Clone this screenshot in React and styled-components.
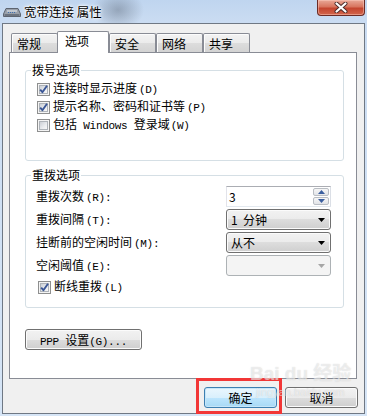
import styled, { createGlobalStyle } from "styled-components";

const GlobalStyle = createGlobalStyle`
  html, body {
    margin: 0;
    padding: 0;
  }
  body {
    width: 367px;
    height: 416px;
    overflow: hidden;
    font-family: "Noto Sans CJK SC", "Liberation Sans", sans-serif;
    font-size: 12px;
    color: #000;
  }
`;

const Window = styled.div`
  position: relative;
  width: 367px;
  height: 416px;
  box-sizing: border-box;
  padding: 0 2px 2px;
  display: flex;
  flex-direction: column;
  background:
    radial-gradient(ellipse 26px 20px at 118px 10px, rgba(60, 70, 85, 0.35), transparent),
    linear-gradient(180deg, #bfd5ef 0%, #cadcf2 22px, #d6e5f6 100%);
`;

const TitleBar = styled.div`
  height: 23px;
  display: flex;
  align-items: flex-start;
`;

const TitleIcon = styled.svg`
  margin: 8px 0 0 1px;
  flex-shrink: 0;
`;

const TitleText = styled.div`
  margin: 4px 0 0 3px;
  font-size: 12.5px;
  line-height: 15px;
  text-shadow: 0 0 5px #fff, 0 0 3px #fff, 0 0 2px #fff;
`;

const CloseButton = styled.div`
  margin-left: auto;
  width: 48px;
  height: 16px;
  box-sizing: border-box;
  border: 1px solid #6b2b25;
  border-top: none;
  border-radius: 0 0 4px 4px;
  display: flex;
  align-items: center;
  justify-content: center;
  background: linear-gradient(180deg, #e9a897 0%, #d8755f 45%, #c4452f 55%, #d2664c 100%);
  box-shadow: inset 0 0 0 1px rgba(255, 210, 200, 0.45);
`;

const Client = styled.div`
  position: relative;
  flex: 1;
  border: 1px solid #6f7884;
  background: #f0f0f0;
  display: flex;
  flex-direction: column;
`;

const TabStrip = styled.div`
  height: 28px;
  box-sizing: border-box;
  margin: 0 7px 0 6px;
  padding-left: 2px;
  display: flex;
  align-items: flex-end;
`;

const Tab = styled.div`
  position: relative;
  box-sizing: border-box;
  border: 1px solid #898c95;
  border-bottom: none;
  border-radius: 2px 2px 0 0;
  font-size: 12px;
  ${(p) =>
    p.$active
      ? `
    z-index: 1;
    width: 52px;
    height: 22px;
    margin: 0 0 -1px -1px;
    padding: 2px 0 0 7px;
    line-height: 14px;
    background: #fff;
  `
      : `
    width: 47px;
    height: 19px;
    padding: 2px 0 0 5px;
    line-height: 15px;
    background: linear-gradient(180deg, #f3f3f3 0%, #ebebeb 50%, #dddddd 50%, #d3d3d3 100%);
    box-shadow: inset 1px 1px 0 #fcfcfc;
  `}
`;

const Panel = styled.div`
  height: 327px;
  box-sizing: border-box;
  margin: 0 7px 0 6px;
  border: 1px solid #898c95;
  background: #fff;
  display: flex;
  flex-direction: column;
`;

const Group = styled.fieldset`
  margin: ${(p) => p.$top}px 12px 0 15px;
  padding: 0;
  min-width: 0;
  border: 1px solid #d5dfe5;
  border-radius: 3px;
`;

const Legend = styled.legend`
  margin-left: 5px;
  padding: 0 1px;
  font-size: 12px;
  line-height: 12px;
`;

const OptionList = styled.div`
  padding: 4px 0 26px 11px;
  display: flex;
  flex-direction: column;
`;

const RedialGrid = styled.div`
  padding: 5px 12px 8px 10px;
  display: grid;
  grid-template-columns: 1fr 105px;
  grid-auto-rows: 21px;
  row-gap: 2px;
  align-items: center;
`;

const FieldLabel = styled.div`
  font-size: 12px;
  line-height: 21px;
  white-space: nowrap;
`;

const Key = styled.span`
  margin-left: ${(p) => p.$gap || 0}px;
  font-family: "Liberation Mono", "DejaVu Sans Mono", monospace;
  font-size: 11px;
  letter-spacing: -0.3px;
  white-space: pre;
`;

const CheckRow = styled.label`
  height: 18px;
  margin-left: ${(p) => p.$inset || 0}px;
  display: flex;
  align-items: center;
  gap: 3px;
  font-size: 12px;
  line-height: 18px;
  white-space: nowrap;
  ${(p) => p.$span && "grid-column: 1 / -1; align-self: start;"}
`;

const Box = styled.span`
  width: 13px;
  height: 13px;
  box-sizing: border-box;
  flex-shrink: 0;
  border: 1px solid #8e8f8f;
  padding: 1px;
  background: #f4f4f4;
  display: flex;
`;

const BoxInner = styled.span`
  flex: 1;
  border: 1px solid #aeb3b9;
  background: linear-gradient(135deg, #cbcfd5 0%, #eaecef 60%, #f7f7f7 100%);
  position: relative;
  display: flex;
  align-items: center;
  justify-content: center;
`;

const Spin = styled.div`
  height: 21px;
  box-sizing: border-box;
  border: 1px solid;
  border-color: #abadb3 #dbdfe6 #e3e9ef #e2e3ea;
  background: #fff;
  display: flex;
  align-items: stretch;
`;

const SpinValue = styled.div`
  flex: 1;
  padding: 2px 0 0 2px;
  line-height: 15px;
`;

const SpinButtons = styled.div`
  width: 16px;
  margin: 1px 1px 1px 0;
  display: flex;
  flex-direction: column;
  gap: 1px;
`;

const SpinButton = styled.div`
  flex: 1;
  border: 1px solid #b9bdc3;
  border-radius: 2px;
  background: linear-gradient(180deg, #f6f6f6, #e2e4e8);
  display: flex;
  align-items: center;
  justify-content: center;
`;

const Combo = styled.div`
  height: 21px;
  box-sizing: border-box;
  border: 1px solid ${(p) => (p.$disabled ? "#adb2b5" : "#707070")};
  border-radius: 3px;
  padding: 0 5px 0 4px;
  display: flex;
  align-items: center;
  justify-content: space-between;
  line-height: 19px;
  white-space: pre;
  background: ${(p) =>
    p.$disabled
      ? "#f4f4f4"
      : "linear-gradient(180deg, #f2f2f2 0%, #ebebeb 50%, #dddddd 50%, #cfcfcf 100%)"};
  box-shadow: ${(p) => (p.$disabled ? "none" : "inset 0 0 0 1px #fbfbfb")};
`;

const Button = styled.button`
  width: ${(p) => p.$width}px;
  height: 21px;
  padding: 0;
  box-sizing: border-box;
  border: 1px solid ${(p) => (p.$primary ? "#3c7fb1" : "#707070")};
  border-radius: 3px;
  font-family: "Noto Sans CJK SC", "Liberation Sans", sans-serif;
  font-size: 12px;
  line-height: 19px;
  color: #000;
  background: ${(p) =>
    p.$primary
      ? "linear-gradient(180deg, #eaf6fd 0%, #d9f0fc 50%, #bee6fd 50%, #a7d9f5 100%)"
      : "linear-gradient(180deg, #f2f2f2 0%, #ebebeb 50%, #dddddd 50%, #cfcfcf 100%)"};
  box-shadow: inset 0 0 0 1px ${(p) => (p.$primary ? "#c7e6f8" : "#fbfbfb")};
`;

const PppButton = styled(Button)`
  margin: 21px 0 0 15px;
`;

const Footer = styled.div`
  margin-top: 8px;
  padding-right: 6px;
  display: flex;
  justify-content: flex-end;
  gap: 8px;
`;

const Highlight = styled.span`
  position: relative;
  display: flex;

  &::after {
    content: "";
    position: absolute;
    inset: -9px -5px -6px -8px;
    border: 3px solid #f23636;
    pointer-events: none;
  }
`;

const Watermark = styled.div`
  position: absolute;
  left: 247px;
  top: 338px;
  display: flex;
  flex-direction: column;
  align-items: flex-start;
  white-space: nowrap;
  color: rgba(255, 255, 255, 0.55);
  text-shadow: 0 0 1px rgba(130, 130, 130, 0.35);
  pointer-events: none;
  font-family: "Liberation Sans", "Noto Sans CJK SC", sans-serif;
`;

const MarkBig = styled.div`
  font-size: 19px;
  font-weight: bold;
  line-height: 24px;
`;

const MarkSmall = styled.div`
  font-size: 11px;
  line-height: 12px;
  margin-left: 6px;
`;

function Check({ checked }) {
  return (
    <Box>
      <BoxInner>
        {checked && (
          <svg width="11" height="11" viewBox="0 0 11 11" style={{ position: "absolute", left: -2, top: -2 }}>
            <path d="M2.2 5.6 L4.4 8.2 L9 1.8" stroke="#3a5696" strokeWidth="1.9" fill="none" strokeLinejoin="round" />
          </svg>
        )}
      </BoxInner>
    </Box>
  );
}

function Arrow({ color = "#000" }) {
  return (
    <svg width="7" height="4" viewBox="0 0 7 4">
      <polygon points="0,0 7,0 3.5,4" fill={color} />
    </svg>
  );
}

function SmallArrow({ up }) {
  return (
    <svg width="7" height="4" viewBox="0 0 7 4">
      <polygon points={up ? "0,4 7,4 3.5,0" : "0,0 7,0 3.5,4"} fill="#3b5f9f" />
    </svg>
  );
}

export default function App() {
  const tabs = ["常规", "选项", "安全", "网络", "共享"];
  return (
    <>
      <GlobalStyle />
      <Window>
        <TitleBar>
          <TitleIcon width="18" height="9" viewBox="0 0 18 9">
            <path d="M3 0.5 H15 L17.5 6 V8.5 H0.5 V6 Z" fill="#9aa1ab" stroke="#5d6470" />
            <rect x="1.5" y="6" width="15" height="2" fill="#6c7480" />
            <path d="M4 3 H14" stroke="#e6ecf3" strokeWidth="1" />
            <path d="M5 4.5 H6 M7 4.5 H8 M9 4.5 H10 M11 4.5 H12" stroke="#3c6fb0" strokeWidth="1" />
          </TitleIcon>
          <TitleText>宽带连接 属性</TitleText>
          <CloseButton>
            <svg width="14" height="11" viewBox="0 0 14 11">
              <path d="M2.5 1.5 L11.5 9.5 M11.5 1.5 L2.5 9.5" stroke="#4a2a28" strokeWidth="4" strokeLinecap="round" />
              <path d="M2.5 1.5 L11.5 9.5 M11.5 1.5 L2.5 9.5" stroke="#fff" strokeWidth="2.2" strokeLinecap="round" />
            </svg>
          </CloseButton>
        </TitleBar>

        <Client>
          <TabStrip>
            {tabs.map((t) => (
              <Tab key={t} $active={t === "选项"}>
                {t}
              </Tab>
            ))}
          </TabStrip>

          <Panel>
            <Group $top={11}>
              <Legend>拨号选项</Legend>
              <OptionList>
                <CheckRow>
                  <Check checked />
                  <span>
                    连接时显示进度<Key $gap={2}>(D)</Key>
                  </span>
                </CheckRow>
                <CheckRow>
                  <Check checked />
                  <span>
                    提示名称、密码和证书等<Key $gap={2}>(P)</Key>
                  </span>
                </CheckRow>
                <CheckRow>
                  <Check />
                  <span>
                    包括<Key> Windows </Key>登录域<Key $gap={1}>(W)</Key>
                  </span>
                </CheckRow>
              </OptionList>
            </Group>

            <Group $top={8}>
              <Legend>重拨选项</Legend>
              <RedialGrid>
                <FieldLabel>
                  重拨次数<Key $gap={2}>(R):</Key>
                </FieldLabel>
                <Spin>
                  <SpinValue>3</SpinValue>
                  <SpinButtons>
                    <SpinButton>
                      <SmallArrow up />
                    </SpinButton>
                    <SpinButton>
                      <SmallArrow />
                    </SpinButton>
                  </SpinButtons>
                </Spin>

                <FieldLabel>
                  重拨间隔<Key $gap={2}>(T):</Key>
                </FieldLabel>
                <Combo>
                  <span>1  分钟</span>
                  <Arrow />
                </Combo>

                <FieldLabel>
                  挂断前的空闲时间<Key $gap={2}>(M):</Key>
                </FieldLabel>
                <Combo>
                  <span>从不</span>
                  <Arrow />
                </Combo>

                <FieldLabel>
                  空闲阈值<Key $gap={2}>(E):</Key>
                </FieldLabel>
                <Combo $disabled>
                  <span />
                  <Arrow color="#a6a6a6" />
                </Combo>

                <CheckRow $span $inset={2}>
                  <Check checked />
                  <span>
                    断线重拨<Key $gap={2}>(L)</Key>
                  </span>
                </CheckRow>
              </RedialGrid>
            </Group>

            <PppButton $width={117}>
              <Key>PPP </Key>设置<Key>(G)...</Key>
            </PppButton>
          </Panel>

          <Footer>
            <Highlight>
              <Button $width={73} $primary>
                确定
              </Button>
            </Highlight>
            <Button $width={73}>取消</Button>
          </Footer>

          <Watermark>
            <MarkBig>Bai du 经验</MarkBig>
            <MarkSmall>jingyan.baidu.com</MarkSmall>
          </Watermark>
        </Client>
      </Window>
    </>
  );
}
